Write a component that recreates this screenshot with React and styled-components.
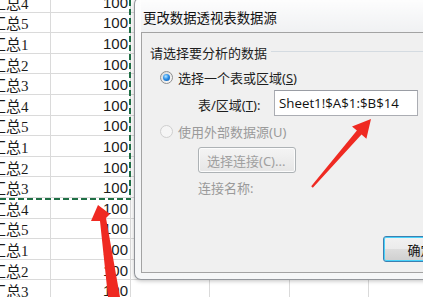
import React from 'react';
import styled, { createGlobalStyle } from 'styled-components';

const GlobalStyle = createGlobalStyle`
  html, body { margin: 0; padding: 0; background: #fff; overflow: hidden; }
  body { font-family: "Noto Sans CJK SC", sans-serif; }
`;

const Page = styled.div`
  position: relative;
  width: 423px;
  height: 297px;
  overflow: hidden;
  background: #fff;
`;

/* ---------- spreadsheet behind the dialog ---------- */

const Sheet = styled.div`
  display: flex;
  flex-direction: column;
  margin-top: -8px;
`;

const Row = styled.div`
  display: grid;
  grid-template-columns: 51px 80px 79px 80px 79px 80px;
  height: 20.6px;
  box-sizing: border-box;
  border-bottom: 1px solid #dadada;
`;

const Cell = styled.div`
  box-sizing: border-box;
  border-right: 1px solid #dadada;
  display: flex;
  align-items: center;
  justify-content: ${p => (p.$num ? 'flex-end' : 'flex-start')};
  padding: 1px 2px 0;
  overflow: hidden;
  white-space: nowrap;
  font-family: ${p => (p.$num ? '"Liberation Sans", Arial, sans-serif' : '"Liberation Serif", "Noto Sans CJK SC", serif')};
  font-size: 15px;
  color: #1b1b1b;
`;

const CutLabel = styled.span`
  margin-left: -11px;
`;

const Marquee = styled.svg`
  position: absolute;
  left: 0;
  top: 0;
`;

/* ---------- dialog ---------- */

const Dialog = styled.div`
  position: absolute;
  left: 134px;
  top: -3px;
  width: 424px;
  height: 283px;
  box-sizing: border-box;
  display: flex;
  flex-direction: column;
  padding: 0 6px 6px;
  border: 1px solid rgba(60, 66, 74, 0.55);
  border-radius: 7px;
  background: linear-gradient(180deg, #fefefe 0%, #f3f4f6 40%, #f6f7f8 100%);
  box-shadow: 0 1px 4px rgba(0, 0, 0, 0.25);
`;

const TitleBar = styled.div`
  height: 34px;
  display: flex;
  align-items: center;
  padding: 4px 0 0 2px;
  box-sizing: border-box;
  font-size: 13.4px;
  color: #111;
  background: linear-gradient(180deg, rgba(255,255,255,0) 0%, rgba(230,232,235,0.5) 100%);
`;

const Panel = styled.div`
  flex: 1;
  display: flex;
  flex-direction: column;
  border: 1px solid #a3a3a3;
  background: #f0f0f0;
  font-family: "Noto Sans", "Noto Sans CJK SC", sans-serif;
  font-size: 13px;
  color: #1e1e1e;
`;

const GroupHead = styled.div`
  display: flex;
  align-items: center;
  padding: 12px 0 0 8px;
  line-height: 17px;
  &::after {
    content: '';
    flex: 1;
    height: 1px;
    margin-left: 4px;
    margin-top: -5px;
    background: #d4dbe1;
  }
`;

const Options = styled.div`
  display: flex;
  flex-direction: column;
  padding-left: 18px;
`;

const OptionRow = styled.label`
  display: flex;
  align-items: center;
  gap: 5px;
  height: 17px;
  margin-top: ${p => p.$top}px;
  color: ${p => (p.$disabled ? '#9a9a9a' : '#1e1e1e')};
`;

const Radio = styled.span`
  width: 13px;
  height: 13px;
  border-radius: 50%;
  box-sizing: border-box;
  border: 1px solid ${p => (p.$disabled ? '#cfcfcf' : '#8e8f8f')};
  background: ${p => (p.$disabled ? '#f5f5f5' : 'linear-gradient(135deg, #d9d9d9, #fbfbfb)')};
  display: flex;
  align-items: center;
  justify-content: center;
  &::after {
    content: '';
    display: ${p => (p.$checked ? 'block' : 'none')};
    width: 7px;
    height: 7px;
    border-radius: 50%;
    background: radial-gradient(circle at 40% 35%, #b6e6ff 0%, #2a8ee8 45%, #0b4f9e 100%);
  }
`;

const Key = styled.span`
  text-decoration: underline;
`;

const Indented = styled.div`
  display: flex;
  flex-direction: column;
  padding-left: 38px;
`;

const RangeRow = styled.div`
  display: flex;
  align-items: center;
  margin-top: 4px;
  height: 26px;
`;

const RangeLabel = styled.span`
  width: 76px;
  padding-top: 2px;
`;

const RangeInput = styled.div`
  width: 144px;
  height: 26px;
  box-sizing: border-box;
  border: 1px solid #abadb3;
  border-top-color: #9a9da4;
  background: #fff;
  display: flex;
  align-items: center;
  padding-left: 4px;
  font-family: "Open Sans", "Noto Sans", sans-serif;
  font-size: 13.3px;
  color: #111;
`;

const Button = styled.div`
  width: ${p => p.$w}px;
  height: 26px;
  box-sizing: border-box;
  display: flex;
  align-items: center;
  justify-content: ${p => (p.$left ? 'flex-start' : 'center')};
  padding-left: ${p => (p.$left ? 8 : 0)}px;
  border-radius: 3px;
  border: 1px solid ${p => (p.$focus ? '#3c7fb1' : '#adb2b5')};
  background: ${p => (p.$disabled ? 'linear-gradient(#f4f4f4, #e6e6e6)' : 'linear-gradient(#f2f2f2 0%, #ebebeb 50%, #dddddd 51%, #cfcfcf 100%)')};
  box-shadow: ${p => (p.$focus ? 'inset 0 0 0 1px #48d2fa' : 'inset 0 0 0 1px #fcfcfc')};
  color: ${p => (p.$disabled ? '#a0a0a0' : '#111')};
  white-space: nowrap;
  overflow: hidden;
`;

const ConnButton = styled(Button)`
  margin-top: 7px;
`;

const ConnName = styled.div`
  margin-top: 7px;
  line-height: 17px;
  color: #9a9a9a;
`;

const Footer = styled.div`
  margin-top: auto;
  display: flex;
  justify-content: flex-end;
  gap: 7px;
  padding: 0 10px 10px 0;
`;

const Overlay = styled.svg`
  position: absolute;
  left: 0;
  top: 0;
  pointer-events: none;
`;

const labels = ['4', '5', '1', '2', '3', '4', '5', '1', '2', '3', '4', '5', '1', '2', '3'];

export default function App() {
  return (
    <Page>
      <GlobalStyle />
      <Sheet>
        {labels.map((n, i) => (
          <Row key={i}>
            <Cell><CutLabel>汇总{n}</CutLabel></Cell>
            <Cell $num>100</Cell>
            <Cell />
            <Cell />
            <Cell />
            <Cell />
          </Row>
        ))}
      </Sheet>
      <Marquee width="134" height="202">
        <line x1="130" y1="0" x2="130" y2="200" stroke="#1f6f45" strokeWidth="2" strokeDasharray="6 3" />
        <line x1="0" y1="199" x2="131" y2="199" stroke="#1f6f45" strokeWidth="2" strokeDasharray="6 3" />
      </Marquee>

      <Dialog>
        <TitleBar>更改数据透视表数据源</TitleBar>
        <Panel>
          <GroupHead>请选择要分析的数据</GroupHead>
          <Options>
            <OptionRow $top={7}>
              <Radio $checked />
              <span>选择一个表或区域(<Key>S</Key>)</span>
            </OptionRow>
            <Indented>
              <RangeRow>
                <RangeLabel>表/区域(<Key>T</Key>):</RangeLabel>
                <RangeInput>Sheet1!$A$1:$B$14</RangeInput>
              </RangeRow>
            </Indented>
            <OptionRow $top={7} $disabled>
              <Radio $disabled />
              <span>使用外部数据源(U)</span>
            </OptionRow>
            <Indented>
              <ConnButton $w={98} $left $disabled>选择连接(C)...</ConnButton>
              <ConnName>连接名称:</ConnName>
            </Indented>
          </Options>
          <Footer>
            <Button $w={75} $focus>确定</Button>
            <Button $w={75}>取消</Button>
          </Footer>
        </Panel>
      </Dialog>

      <Overlay width="423" height="297">
        <polygon
          fill="#ef2a22"
          points="98,205 110,214 106,218 120,297 108,297 100,221 91,221"
        />
        <polygon
          fill="#ef2a22"
          points="371,119 366.4,138.8 361.5,134.6 312.8,187.7 311.2,186.3 356.9,130.6 352,126.4"
        />
      </Overlay>
    </Page>
  );
}
